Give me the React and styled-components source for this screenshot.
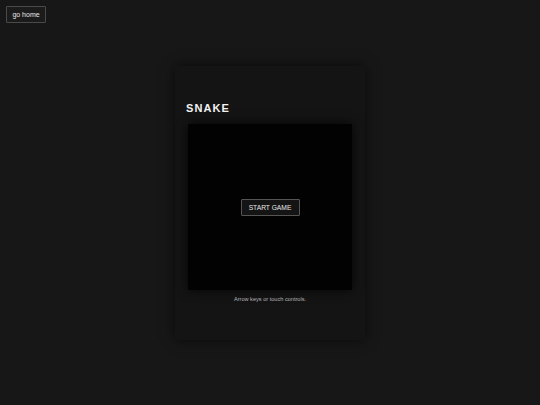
import React from 'react';
import styled, { createGlobalStyle } from 'styled-components';

const GlobalStyle = createGlobalStyle`
  html, body {
    margin: 0;
    padding: 0;
    background: #171717;
    font-family: "Liberation Sans", Arial, sans-serif;
  }
`;

const Page = styled.div`
  min-height: 100vh;
  display: flex;
  align-items: center;
  justify-content: center;
`;

const HomeButton = styled.button`
  position: fixed;
  top: 6px;
  left: 6px;
  width: 40px;
  height: 17px;
  padding: 0;
  background: #1b1b1b;
  color: #e6e6e6;
  border: 1px solid #4a4a4a;
  border-radius: 1px;
  font-family: "Liberation Sans", Arial, sans-serif;
  font-size: 7px;
  cursor: pointer;
`;

const Card = styled.div`
  width: 190px;
  height: 274px;
  box-sizing: border-box;
  padding: 34px 13px 0 13px;
  background: #141414;
  box-shadow: 0 0 12px rgba(0, 0, 0, 0.6);
  display: flex;
  flex-direction: column;
`;

const Title = styled.h1`
  margin: 0 0 8px -2px;
  font-size: 11px;
  line-height: 16px;
  font-weight: bold;
  letter-spacing: 1.1px;
  color: #f2f2f2;
`;

const Board = styled.div`
  width: 164px;
  height: 166px;
  background: #020202;
  box-shadow: 0 0 10px rgba(0, 0, 0, 0.8);
  display: flex;
  align-items: center;
  justify-content: center;
`;

const StartButton = styled.button`
  width: 59px;
  height: 17px;
  padding: 0;
  margin-top: 1px;
  background: #141414;
  color: #e8e8e8;
  border: 1px solid #555;
  border-radius: 1px;
  font-family: "Liberation Sans", Arial, sans-serif;
  font-size: 6.7px;
  cursor: pointer;
`;

const Caption = styled.p`
  margin: 6px 0 0 0;
  text-align: center;
  font-size: 5.6px;
  line-height: 7px;
  color: #b5b5b5;
`;

export default function App() {
  return (
    <>
      <GlobalStyle />
      <HomeButton>go home</HomeButton>
      <Page>
        <Card>
          <Title>SNAKE</Title>
          <Board>
            <StartButton>START GAME</StartButton>
          </Board>
          <Caption>Arrow keys or touch controls.</Caption>
        </Card>
      </Page>
    </>
  );
}
